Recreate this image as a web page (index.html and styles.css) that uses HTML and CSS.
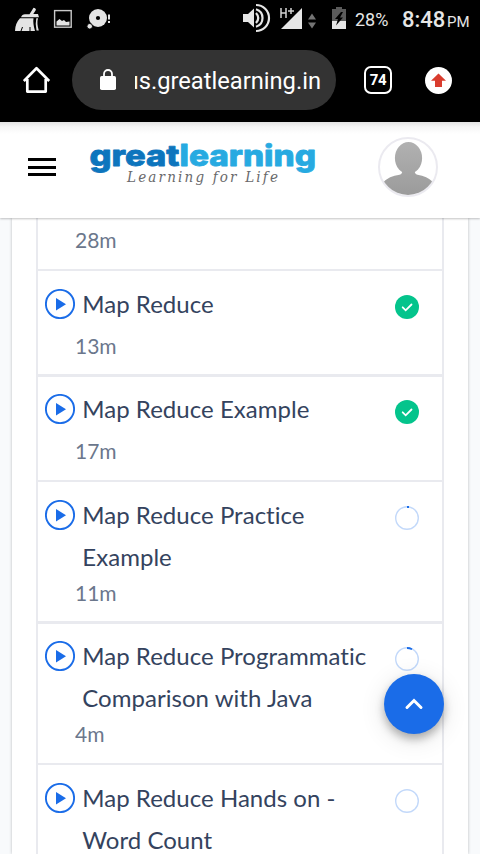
FILE: index.html
```
<!DOCTYPE html>
<html lang="en">
<head>
<meta charset="utf-8">
<title>Great Learning</title>
<link rel="stylesheet" href="styles.css">
</head>
<body>
<svg class="defs" width="0" height="0">
  <symbol id="play" viewBox="0 0 30 30"><circle cx="15" cy="15" r="14.100" fill="none" stroke="#1a6ce8" stroke-width="1.900"/><path d="M11 9v12.400l10-6.200z" fill="#1a6ce8"/></symbol>
  <symbol id="done" viewBox="0 0 24 24"><circle cx="12" cy="12" r="12" fill="#04c48c"/><path d="M7.700 12.300l3 3 5.800-5.800" fill="none" stroke="#fff" stroke-width="1.800" stroke-linecap="round"/></symbol>
  <symbol id="ring" viewBox="0 0 24 24"><circle cx="12" cy="12" r="11.300" fill="none" stroke="#c3d9fa" stroke-width="1.400"/></symbol>
</svg>
<div class="screen">
  <div class="status">
    <svg class="notices" width="120" height="40" viewBox="0 0 120 40" fill="#e4e4e4">
      <path d="M33.500 7.800q2 .2 2.500 2l-2.700 4.200H38l1 3.200H21q1-3 4-3h4.500z"/>
      <path d="M20 18.200h13.500q-.8 5 1.500 12.800H15q0-7.500 5-12.800z"/>
      <path d="M36.300 18.200h1.700q-1.500 5 .8 12.300h-2.300q-1.500-6-.2-12.300z"/>
      <path d="M21 31l1.500-4M30 31v-4" stroke="#000"/>
      <rect x="54.600" y="10.600" width="16.600" height="16.600" fill="none" stroke="#c9c9c9" stroke-width="1.400"/>
      <path d="M56.500 25.500v-4l3-2.500 2.500 2 2-1 2 2 3.500-.5v4z"/>
      <circle cx="98" cy="18" r="9"/><circle cx="98" cy="18" r="2.100" fill="#000"/>
      <circle cx="89.700" cy="26.300" r="2.800" stroke="#000" stroke-width="1"/>
      <path d="M108 14.500h2v5h-2zM108 21h2v2h-2z"/>
    </svg>
    <svg class="signals" width="110" height="40" viewBox="240 0 110 40" fill="#e6e6e6">
      <path d="M243 14h5l6-5.500v19L248 22h-5z"/>
      <path d="M256 13q4.500 5 0 10" fill="none" stroke="#e6e6e6" stroke-width="2.200"/>
      <path d="M256 9.200a9.200 9.200 0 0 1 0 17.600M256 5a13 13 0 0 1 0 26" fill="none" stroke="#e6e6e6" stroke-width="2.200"/>
      <path d="M302 8v21h-21z"/>
      <path d="M281 8v10M286 8v10M281 13h5M288 11h6M291 8v6" fill="none" stroke="#d4d4d4" stroke-width="1.500"/>
      <path d="M308 19.500l4-6 4 6zM308 22.500l4 6 4-6z" fill="#747474"/>
      <path d="M336 7h6v2h4v12h-14V9h4z" fill="#5b5b5b"/><path d="M332 21h14v8h-14z"/>
      <path d="M341 12l-6 7h3l-2 6.500 7-8h-3l3-5.500z" fill="#000"/>
    </svg>
    <span class="battery">28%</span>
    <span class="clock">8:48</span><span class="pm">PM</span>
  </div>
  <div class="browser">
    <svg class="home" width="28" height="28" viewBox="0 0 28 28" fill="none" stroke="#fff" stroke-width="2.700" stroke-linejoin="round"><path d="M.800 15L13.500 2.300 26.200 15M4.300 13v12.600h18.400V13"/></svg>
    <div class="url">
      <svg width="16" height="22" viewBox="0 0 16 22"><rect y="7" width="16" height="14" rx="1.700" fill="#fff"/><path d="M4 8V5a4 4 0 0 1 8 0v3" fill="none" stroke="#fff" stroke-width="1.800"/></svg>
      <div class="address"><span>us.greatlearning.in</span></div>
    </div>
    <div class="tabs">74</div>
    <svg class="update" width="27" height="27" viewBox="0 0 27 27"><circle cx="13.500" cy="13.500" r="13.500" fill="#fff"/><path d="M13.500 6.500l7.500 7.200h-4v6.300h-7v-6.300H6z" fill="#d93c2e"/></svg>
  </div>
  <header class="top">
    <div class="menu"><i></i><i></i><i></i></div>
    <svg class="logo" width="230" height="56" viewBox="88 134 230 56">
      <g class="brand"><text x="89.500" y="165.600" textLength="90" lengthAdjust="spacingAndGlyphs" fill="#0d75bd" stroke="#0d75bd">great</text><text x="179.500" y="165.600" textLength="136.500" lengthAdjust="spacingAndGlyphs" fill="#27aae1" stroke="#27aae1">learning</text></g>
      <text class="tagline" x="127" y="181.700" textLength="151">Learning for Life</text>
    </svg>
    <svg class="avatar" width="60" height="60" viewBox="0 0 60 60">
      <defs><linearGradient id="grey" gradientUnits="userSpaceOnUse" x1="0" y1="5" x2="0" y2="58"><stop stop-color="#b1b1b1"/><stop offset="1" stop-color="#9b9b9b"/></linearGradient><clipPath id="round"><circle cx="30" cy="30" r="28"/></clipPath></defs>
      <circle cx="30" cy="30" r="29" fill="#fff" stroke="#ebeaf0" stroke-width="2"/>
      <g clip-path="url(#round)" fill="url(#grey)"><ellipse cx="30.500" cy="21" rx="13.600" ry="16"/><path d="M24.500 33h12q0 4 3 4.700Q49 39 55 45v15H5V45.500q6-6.500 16.500-7.800 3-.7 3-4.700z"/></g>
    </svg>
  </header>
  <main class="page">
    <section class="card">
      <ul class="lessons">
        <li class="lesson tail"><p class="time">28m</p></li>
        <li class="lesson"><svg class="play"><use href="#play"/></svg><div class="text"><h3>Map Reduce</h3><p class="time">13m</p></div><svg class="state"><use href="#done"/></svg></li>
        <li class="lesson thick"><svg class="play"><use href="#play"/></svg><div class="text"><h3>Map Reduce Example</h3><p class="time">17m</p></div><svg class="state"><use href="#done"/></svg></li>
        <li class="lesson"><svg class="play"><use href="#play"/></svg><div class="text"><h3>Map Reduce Practice<br>Example</h3><p class="time">11m</p></div><svg class="state"><use href="#ring"/><path d="M12 1h2" stroke="#1a6ce8" stroke-width="2"/></svg></li>
        <li class="lesson thick"><svg class="play"><use href="#play"/></svg><div class="text"><h3>Map Reduce Programmatic<br>Comparison with Java</h3><p class="time">4m</p></div><svg class="state"><use href="#ring"/><path d="M12 1a11 11 0 0 1 5 1.200" fill="none" stroke="#1a6ce8" stroke-width="1.800"/></svg></li>
        <li class="lesson"><svg class="play"><use href="#play"/></svg><div class="text"><h3>Map Reduce Hands on -<br>Word Count</h3></div><svg class="state"><use href="#ring"/></svg></li>
      </ul>
    </section>
  </main>
  <div class="fab"><svg width="20" height="14" viewBox="0 0 20 14"><path d="M3 10.500l7-7 7 7" fill="none" stroke="#fff" stroke-width="3" stroke-linecap="round"/></svg></div>
</div>
</body>
</html>
```
FILE: styles.css
```
* { box-sizing: border-box; }
body, h3, p, ul { margin: 0; padding: 0; }
body { font-family: Lato, sans-serif; overflow: hidden; }
.defs { position: absolute; }
.screen { position: relative; width: 480px; height: 854px; overflow: hidden; display: flex; flex-direction: column; background: #fff; }
.status { height: 40px; flex: none; display: flex; background: #000; color: #e6e6e6; font-family: Roboto, sans-serif; line-height: 40px; white-space: nowrap; }
.notices { flex: none; }
.signals { flex: none; margin-left: 120px; }
.battery { width: 47px; padding-left: 5px; font-size: 18px; }
.clock { width: 50px; padding-left: 5px; font-size: 22px; font-weight: 500; }
.pm { font-size: 15px; line-height: 44px; }
.browser { height: 82px; flex: none; display: flex; align-items: center; background: #000; color: #fff; font-family: Roboto, sans-serif; padding: 0 27px 2px 23px; }
.home { margin-right: 21px; }
.url { width: 264px; height: 60px; border-radius: 30px; background: #333; display: flex; align-items: center; padding: 0 15px 0 28px; }
.address { margin-left: 19px; width: 186px; height: 36px; overflow: hidden; display: flex; justify-content: flex-end; font-size: 23.700px; line-height: 38px; white-space: nowrap; }
.tabs { width: 28px; height: 28px; margin: 0 33px 0 28px; border: 2.500px solid #fff; border-radius: 7px; font-size: 15px; font-weight: 700; line-height: 24px; text-align: center; letter-spacing: -.3px; }
.top { height: 96px; flex: none; position: relative; z-index: 1; display: flex; align-items: flex-start; padding: 0 42px 0 28px; background: linear-gradient(#e3e3e3, #f6f6f6 5px, #fff 12px); box-shadow: 0 1px 2px rgba(0,0,0,.24); }
.menu { width: 28px; margin-top: 36px; display: flex; flex-direction: column; gap: 4.500px; }
.menu i { height: 3px; background: #000; }
.logo { margin: 12px 60px 0 32px; }
.brand { font: 800 29.500px Inter, sans-serif; stroke-width: .8px; stroke-linejoin: round; }
.tagline { font: italic 15px "DejaVu Serif Condensed", "DejaVu Serif", serif; font-stretch: condensed; fill: #69696b; }
.avatar { margin-top: 15px; }
.page { flex: 1; min-height: 0; background: #f8fafc; padding: 0 12px; }
.card { height: 100%; padding: 0 24px; background: #fff; box-shadow: 0 0 3px rgba(0,0,0,.25); }
.lessons { height: 100%; list-style: none; border: solid #e9eaef; border-width: 0 2px; }
.lesson { display: flex; padding: 12px 0 13px 7px; border-top: 2px solid #e9eaef; }
.lesson.thick { padding-top: 11px; padding-bottom: 14px; border-top-width: 3px; }
.lesson.tail { height: 51px; padding: 7px 0 0 37px; border: 0; }
.play { width: 30px; height: 30px; margin-top: 6px; flex: none; }
.text { flex: 1; }
h3 { min-height: 48px; margin-left: 7.300px; font-size: 24px; line-height: 42px; font-weight: 400; font-variant-ligatures: none; letter-spacing: .03px; color: #34435e; white-space: nowrap; }
.time { font-size: 21px; line-height: 30px; color: #6b778c; }
.state { width: 24px; height: 24px; margin: 12px 23px 0 0; flex: none; }
.fab { position: absolute; left: 384px; top: 674px; z-index: 2; width: 60px; height: 60px; border-radius: 50%; background: #1a6ce8; box-shadow: 0 5px 9px rgba(0,0,0,.28), 0 5px 26px rgba(0,0,0,.12); display: flex; align-items: center; justify-content: center; }
```
